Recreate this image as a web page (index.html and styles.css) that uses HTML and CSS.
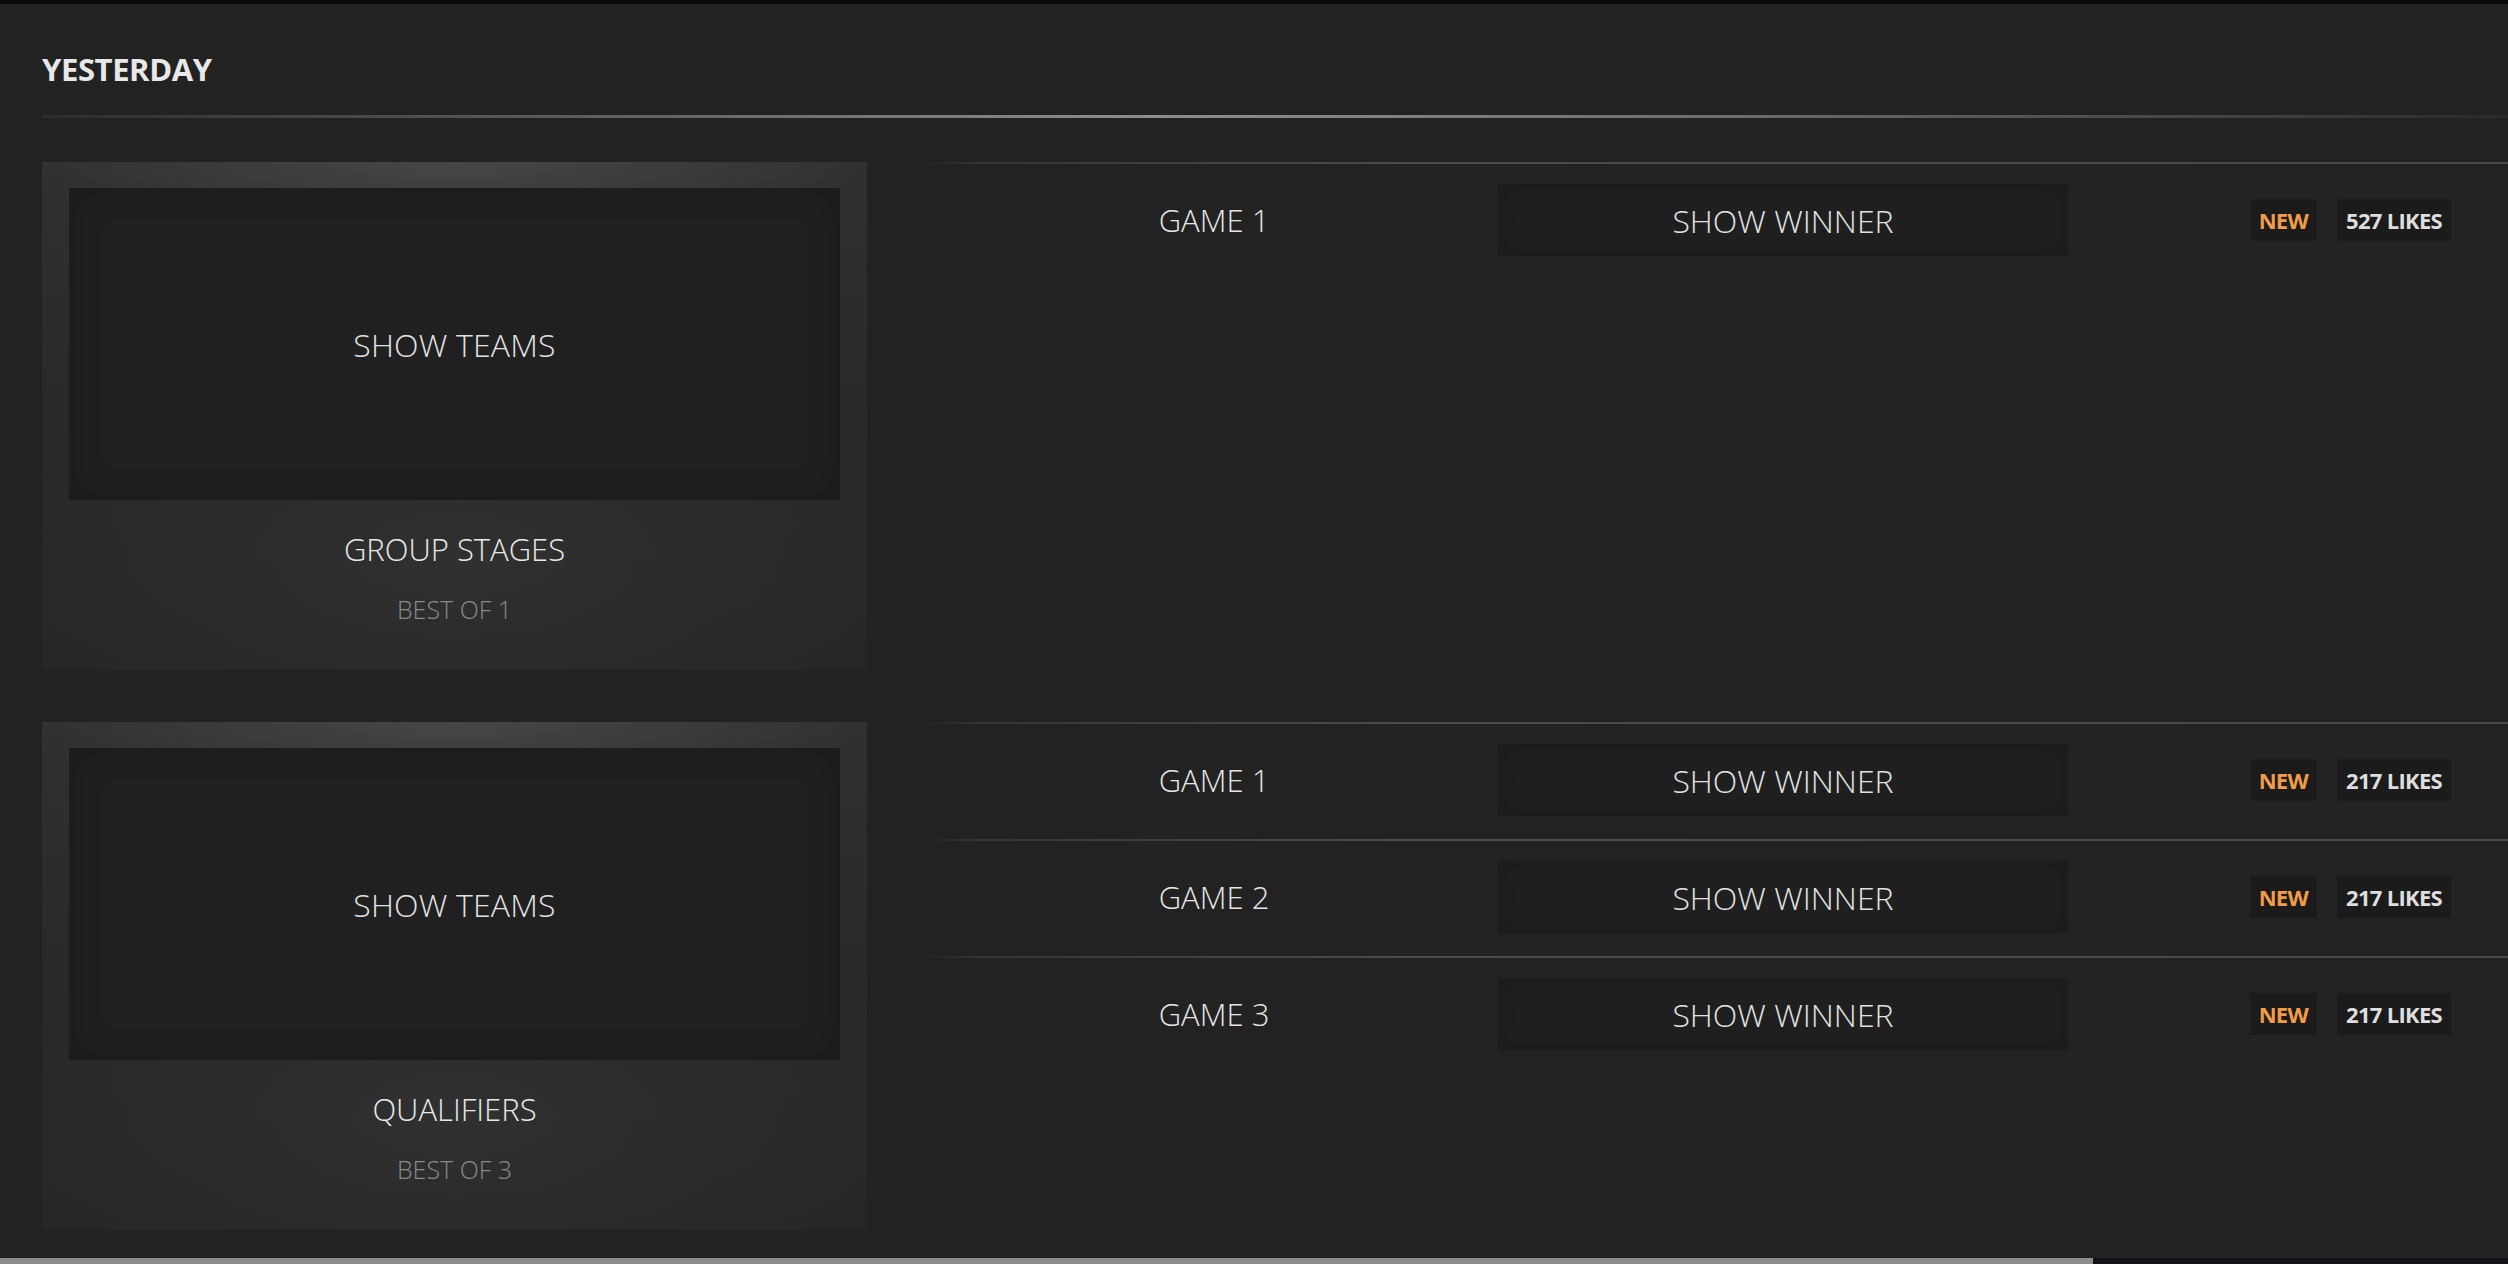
FILE: index.html
```html
<!DOCTYPE html>
<html lang="en">
<head>
    <meta charset="UTF-8">
    <meta name="viewport" content="width=device-width, initial-scale=1.0">
    <title>Results - Yesterday</title>
    <link rel="stylesheet" href="styles.css">
</head>
<body>
    <div class="topbar"></div>
    <main class="day">
        <h2 class="day-title">YESTERDAY</h2>
        <div class="day-rule"></div>

        <section class="stage">
            <div class="stage-card">
                <div class="teams">SHOW TEAMS</div>
                <div class="stage-name">GROUP STAGES</div>
                <div class="stage-format">BEST OF 1</div>
            </div>
            <div class="games">
                <div class="game">
                    <div class="game-label">GAME 1</div>
                    <div class="winner">SHOW WINNER</div>
                    <div class="tags">
                        <span class="tag tag-new">NEW</span>
                        <span class="tag">527 LIKES</span>
                    </div>
                </div>
            </div>
        </section>

        <section class="stage">
            <div class="stage-card">
                <div class="teams">SHOW TEAMS</div>
                <div class="stage-name">QUALIFIERS</div>
                <div class="stage-format">BEST OF 3</div>
            </div>
            <div class="games">
                <div class="game">
                    <div class="game-label">GAME 1</div>
                    <div class="winner">SHOW WINNER</div>
                    <div class="tags">
                        <span class="tag tag-new">NEW</span>
                        <span class="tag">217 LIKES</span>
                    </div>
                </div>
                <div class="game">
                    <div class="game-label">GAME 2</div>
                    <div class="winner">SHOW WINNER</div>
                    <div class="tags">
                        <span class="tag tag-new">NEW</span>
                        <span class="tag">217 LIKES</span>
                    </div>
                </div>
                <div class="game">
                    <div class="game-label">GAME 3</div>
                    <div class="winner">SHOW WINNER</div>
                    <div class="tags">
                        <span class="tag tag-new">NEW</span>
                        <span class="tag">217 LIKES</span>
                    </div>
                </div>
            </div>
        </section>
    </main>
    <div class="scrollbar"><div class="scrollbar-thumb"></div></div>
</body>
</html>
```

FILE: styles.css
```css
html, body {
    height: 100%;
}
body {
    margin: 0;
    background-color: #222222;
    color: #e4e4e4;
    font-family: "Open Sans", "DejaVu Sans", sans-serif;
    font-weight: 300;
    display: flex;
    flex-direction: column;
    overflow: hidden;
}
.topbar {
    height: 4px;
    flex-shrink: 0;
    background-color: #0b0b0b;
}
.day {
    flex: 1;
    min-height: 0;
    overflow: hidden;
    padding: 46px 0 0 42px;
}
.day-title {
    margin: 0;
    font-size: 31px;
    line-height: 38px;
    font-weight: 700;
    letter-spacing: -0.4px;
    color: #e8e8e8;
}
.day-rule {
    height: 3px;
    margin: 27px 0 44px;
    background: linear-gradient(to right, #2c2c2c 0%, #5a5a5a 20%, #8e8e8e 45%, #6a6a6a 70%, #2a2a2a 100%);
}

/* one stage: card on the left, list of games on the right */
.stage {
    display: grid;
    grid-template-columns: 825px 1fr;
    column-gap: 53px;
}
.stage + .stage {
    margin-top: 52px;
}
.stage-card {
    padding: 26px 27px 0;
    height: 482px;
    text-align: center;
    background:
        radial-gradient(ellipse 55% 40% at 50% 78%, #303030 0%, rgba(48, 48, 48, 0) 100%),
        radial-gradient(ellipse 50% 14% at 50% 0%, #474747 0%, rgba(71, 71, 71, 0) 100%),
        linear-gradient(to bottom, #313131 0%, #2a2a2a 40%, #262626 100%);
}
.teams {
    height: 312px;
    display: flex;
    align-items: center;
    justify-content: center;
    background-color: #202020;
    box-shadow: inset 0 0 34px rgba(0, 0, 0, 0.18);
    font-size: 32px;
    letter-spacing: 0.2px;
    color: #e2e2e2;
}
.stage-name {
    margin-top: 29px;
    font-size: 31px;
    line-height: 40px;
    color: #e8e8e8;
}
.stage-format {
    margin-top: 25px;
    font-size: 25px;
    line-height: 30px;
    color: #8a8a8a;
}

.game {
    display: grid;
    grid-template-columns: 578px 570px 1fr;
    align-items: center;
    padding: 20px 57px 23px 0;
    border-top: 2px solid transparent;
    border-image: linear-gradient(to right, rgba(60, 60, 60, 0) 0%, #353535 4%, #4c4c4c 30%, #4a4a4a 100%) 1;
}
.game-label {
    padding-left: 10px;
    text-align: center;
    font-size: 31px;
    color: #e6e6e6;
}
.winner {
    height: 72px;
    display: flex;
    align-items: center;
    justify-content: center;
    background-color: #1f1f1f;
    box-shadow: inset 0 0 22px rgba(0, 0, 0, 0.12);
    font-size: 32px;
    color: #e2e2e2;
}
.tags {
    display: flex;
    justify-content: flex-end;
    gap: 20px;
}
.tag {
    padding: 0 9px;
    height: 42px;
    line-height: 42px;
    background-color: #1b1b1b;
    font-size: 22px;
    font-weight: 700;
    letter-spacing: -0.7px;
    color: #dedede;
}
.tag-new {
    color: #f39c48;
}

.scrollbar {
    height: 6px;
    flex-shrink: 0;
    background-color: #121217;
}
.scrollbar-thumb {
    width: 2093px;
    height: 100%;
    background-color: #8c8c8c;
}
```
